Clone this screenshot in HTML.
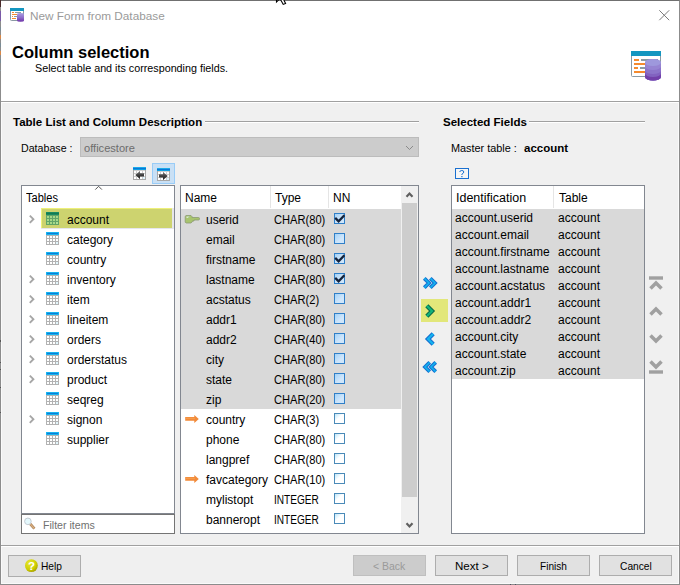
<!DOCTYPE html>
<html><head><meta charset="utf-8">
<style>
*{margin:0;padding:0;box-sizing:border-box}
html,body{width:680px;height:585px;overflow:hidden;background:#f0f0f0}
body{position:relative;font-family:"Liberation Sans",sans-serif;font-size:12px;color:#000}
.a{position:absolute}
.t{position:absolute;white-space:nowrap;line-height:20px;height:20px;transform-origin:0 0}
</style></head><body>

<div class="a" style="left:0px;top:0px;width:680px;height:585px;background:#f0f0f0;border:1px solid #8c8c8c;border-top-color:#707070"></div>
<div class="a" style="left:1px;top:1px;width:678px;height:100px;background:#fff"></div>
<div class="a" style="left:1px;top:101px;width:678px;height:1px;background:#a0a0a0"></div>
<div class="a" style="left:1px;top:102px;width:678px;height:1px;background:#fff"></div>
<div class="a" style="left:1px;top:545px;width:678px;height:1px;background:#a0a0a0"></div>
<div class="a" style="left:1px;top:546px;width:678px;height:1px;background:#fff"></div>
<div class="a" style="left:1px;top:103px;width:1px;height:442px;background:#fafafa"></div>
<div class="a" style="left:678px;top:103px;width:1px;height:442px;background:#fafafa"></div>
<div class="a" style="left:1px;top:547px;width:1px;height:37px;background:#fafafa"></div>
<div class="a" style="left:678px;top:547px;width:1px;height:37px;background:#fafafa"></div>
<div class="a" style="left:1px;top:583px;width:678px;height:1px;background:#fafafa"></div>
<div class="a" style="left:0px;top:0px;width:1px;height:7px;background:#4a2a2a"></div>
<div class="a" style="left:0px;top:11px;width:1px;height:10px;background:#7a5aa8"></div>
<div class="a" style="left:0px;top:27px;width:1px;height:4px;background:#7a8c96"></div>
<div class="a" style="left:0px;top:35px;width:1px;height:4px;background:#d88848"></div>
<div class="a" style="left:0px;top:43px;width:1px;height:4px;background:#7a8c96"></div>
<div class="a" style="left:0px;top:51px;width:1px;height:4px;background:#d88848"></div>
<div class="a" style="left:0px;top:59px;width:1px;height:4px;background:#7a8c96"></div>
<div class="a" style="left:0px;top:70px;width:1px;height:1px;background:#8a9aa4"></div>
<svg class="a" style="left:10px;top:8px" width="15" height="14" viewBox="0 0 15 14">
 <defs><linearGradient id="scyl" x1="0" y1="0" x2="0" y2="1"><stop offset="0" stop-color="#a89ee0"/><stop offset="0.5" stop-color="#9070cc"/><stop offset="1" stop-color="#6e34a8"/></linearGradient></defs>
 <rect x="0.5" y="0.5" width="13" height="12" rx="0.8" fill="#fff" stroke="#8a9aa4"/>
 <rect x="0" y="0" width="14" height="3" fill="#1496c0"/>
 <rect x="2" y="4" width="2" height="1" fill="#f58a2e"/><rect x="5" y="4" width="6" height="1" fill="#8c9aa2"/>
 <rect x="2" y="6" width="5" height="1" fill="#f58a2e"/>
 <rect x="2" y="8" width="1" height="1" fill="#f58a2e"/><rect x="4" y="8" width="4" height="1" fill="#8c9aa2"/>
 <rect x="2" y="10" width="4" height="1" fill="#f58a2e"/>
 <path d="M7 6.2A3.5 1.2 0 0 1 14 6.2V12.5A3.5 1.2 0 0 1 7 12.5Z" fill="url(#scyl)"/>
</svg>
<div class="t" style="left:30px;top:6px;font-size:11.77px;color:#9a9a9a">New Form from Database</div>
<svg class="a" style="left:658px;top:9px" width="13" height="13" viewBox="0 0 13 13"><path d="M1.3 1.3L11.2 11.2M11.2 1.3L1.3 11.2" stroke="#7a7a7a" stroke-width="1"/></svg>
<div class="t" style="left:12px;top:42px;font-size:16.5px;font-weight:bold">Column selection</div>
<div class="t" style="left:35px;top:58px;font-size:10.75px">Select table and its corresponding fields.</div>
<svg class="a" style="left:628px;top:48px" width="36" height="36" viewBox="628 48 36 36"><rect x="631.5" y="51.5" width="29" height="25" rx="1" fill="#fff" stroke="#8a9aa4"/><rect x="631" y="51" width="30" height="5" fill="#1496c0"/><rect x="634" y="59" width="5" height="2" fill="#f58a2e"/><rect x="641" y="59" width="17" height="2" fill="#8c9aa2"/><rect x="634" y="63" width="12" height="2" fill="#f58a2e"/><rect x="634" y="67" width="4" height="2" fill="#f58a2e"/><rect x="640" y="67" width="10" height="2" fill="#8c9aa2"/><rect x="634" y="71" width="12" height="2" fill="#f58a2e"/><path d="M645 62.5A8 3.5 0 0 1 661 62.5V77A8 3.5 0 0 1 645 77Z" fill="#9684d2"/><path d="M645 66.5A8 3.5 0 0 0 661 66.5V77A8 3.5 0 0 1 645 77Z" fill="#8c74ca"/><path d="M645 70.5A8 3.5 0 0 0 661 70.5V77A8 3.5 0 0 1 645 77Z" fill="#8262c0"/><path d="M645 73.5A8 3.5 0 0 0 661 73.5V77A8 3.5 0 0 1 645 77Z" fill="#7240aa"/><ellipse cx="653" cy="62.5" rx="8" ry="3.5" fill="#9e98dc"/></svg>
<div class="t" style="left:13px;top:112px;font-size:11.53px;font-weight:bold">Table List and Column Description</div>
<div class="a" style="left:205px;top:121px;width:214px;height:1px;background:#a0a0a0"></div>
<div class="a" style="left:205px;top:122px;width:214px;height:1px;background:#fff"></div>
<div class="t" style="left:21px;top:138px;font-size:10.65px">Database :</div>
<div class="a" style="left:80px;top:137px;width:339px;height:20px;background:#cccccc;border:1px solid #bcbcbc"></div>
<div class="t" style="left:84px;top:138px;font-size:11.1px;color:#6d6d6d">officestore</div>
<svg class="a" style="left:405px;top:144px" width="11" height="7" viewBox="0 0 11 7"><path d="M1 2L4.5 5.5L8 2" stroke="#8a8a8a" fill="none" stroke-width="1"/></svg>
<svg class="a" style="left:133px;top:167px" width="13" height="13" viewBox="0 0 13 13"><defs><linearGradient id="tb" x1="0" y1="0" x2="0" y2="1"><stop offset="0" stop-color="#28c4f0"/><stop offset="0.5" stop-color="#0a78d8"/><stop offset="1" stop-color="#10b4ea"/></linearGradient><linearGradient id="ag" x1="0" y1="0" x2="0" y2="1"><stop offset="0" stop-color="#808080"/><stop offset="0.5" stop-color="#404040"/><stop offset="1" stop-color="#1a1a1a"/></linearGradient></defs><rect x="0" y="0" width="13" height="13" fill="#a8a8a8"/><rect x="1" y="3" width="11" height="9" fill="#cfcfcf"/><rect x="0" y="0" width="13" height="3" fill="url(#tb)"/><rect x="1" y="4" width="2" height="2" fill="#fff"/><rect x="1" y="7" width="2" height="2" fill="#fff"/><rect x="1" y="10" width="2" height="2" fill="#fff"/><rect x="4" y="4" width="2" height="2" fill="#fff"/><rect x="4" y="7" width="2" height="2" fill="#fff"/><rect x="4" y="10" width="2" height="2" fill="#fff"/><rect x="7" y="4" width="2" height="2" fill="#fff"/><rect x="7" y="7" width="2" height="2" fill="#fff"/><rect x="7" y="10" width="2" height="2" fill="#fff"/><rect x="10" y="4" width="2" height="2" fill="#fff"/><rect x="10" y="7" width="2" height="2" fill="#fff"/><rect x="10" y="10" width="2" height="2" fill="#fff"/><rect x="10" y="10" width="2" height="2" fill="#dff4fc"/><path d="M2.3 8L7 4V6.2H11V9.6H7V12Z" fill="url(#ag)"/></svg>
<div class="a" style="left:152px;top:163px;width:23px;height:21px;background:#c9e0f5;border:1px solid #99ccf7"></div>
<svg class="a" style="left:157px;top:168px" width="13" height="13" viewBox="0 0 13 13"><defs><linearGradient id="tb" x1="0" y1="0" x2="0" y2="1"><stop offset="0" stop-color="#28c4f0"/><stop offset="0.5" stop-color="#0a78d8"/><stop offset="1" stop-color="#10b4ea"/></linearGradient><linearGradient id="ag" x1="0" y1="0" x2="0" y2="1"><stop offset="0" stop-color="#808080"/><stop offset="0.5" stop-color="#404040"/><stop offset="1" stop-color="#1a1a1a"/></linearGradient></defs><rect x="0" y="0" width="13" height="13" fill="#a8a8a8"/><rect x="1" y="3" width="11" height="9" fill="#cfcfcf"/><rect x="0" y="0" width="13" height="3" fill="url(#tb)"/><rect x="1" y="4" width="2" height="2" fill="#fff"/><rect x="1" y="7" width="2" height="2" fill="#fff"/><rect x="1" y="10" width="2" height="2" fill="#fff"/><rect x="4" y="4" width="2" height="2" fill="#fff"/><rect x="4" y="7" width="2" height="2" fill="#fff"/><rect x="4" y="10" width="2" height="2" fill="#fff"/><rect x="7" y="4" width="2" height="2" fill="#fff"/><rect x="7" y="7" width="2" height="2" fill="#fff"/><rect x="7" y="10" width="2" height="2" fill="#fff"/><rect x="10" y="4" width="2" height="2" fill="#fff"/><rect x="10" y="7" width="2" height="2" fill="#fff"/><rect x="10" y="10" width="2" height="2" fill="#fff"/><rect x="10" y="10" width="2" height="2" fill="#dff4fc"/><path d="M10.7 8L6 4V6.2H2V9.6H6V12Z" fill="url(#ag)"/></svg>
<div class="a" style="left:21px;top:185px;width:154px;height:329px;background:#fff;border:1px solid #828790"></div>
<div class="t" style="left:26px;top:188px;transform:scaleX(0.9200)">Tables</div>
<svg class="a" style="left:93px;top:185px" width="10" height="6" viewBox="0 0 10 6"><path d="M2.3 4.6L5.6 1.3L8.9 4.6" stroke="#555" fill="none"/></svg>
<div class="a" style="left:41px;top:228px;width:133px;height:1px;background:#e6e6ee"></div>
<div class="a" style="left:172px;top:208px;width:2px;height:20px;background:#e6e6ea"></div>
<div class="a" style="left:41px;top:208px;width:131px;height:20px;background:#cdd36f;border-top:1px solid #eef07a;border-left:1px solid #f0f27a"></div>
<svg class="a" style="left:28px;top:214px" width="8" height="10" viewBox="0 0 8 10"><path d="M1.8 1.6L5.4 5.2L1.8 8.8" stroke="#a6a6a6" fill="none" stroke-width="1.9"/></svg>
<svg class="a" style="left:46px;top:212px" width="13" height="13" viewBox="0 0 13 13"><rect x="0" y="3" width="13" height="10" fill="#62a468"/><rect x="0" y="0" width="13" height="3" fill="#1a8a62"/><rect x="0" y="1" width="13" height="1" fill="#127a52"/><rect x="1" y="4" width="2" height="2" fill="#a6d888"/><rect x="1" y="7" width="2" height="2" fill="#a6d888"/><rect x="1" y="10" width="2" height="2" fill="#a6d888"/><rect x="4" y="4" width="2" height="2" fill="#a6d888"/><rect x="4" y="7" width="2" height="2" fill="#a6d888"/><rect x="4" y="10" width="2" height="2" fill="#a6d888"/><rect x="7" y="4" width="2" height="2" fill="#a6d888"/><rect x="7" y="7" width="2" height="2" fill="#a6d888"/><rect x="7" y="10" width="2" height="2" fill="#a6d888"/><rect x="10" y="4" width="2" height="2" fill="#a6d888"/><rect x="10" y="7" width="2" height="2" fill="#a6d888"/><rect x="10" y="10" width="2" height="2" fill="#b0e098"/></svg>
<div class="t" style="left:67px;top:210px">account</div>
<svg class="a" style="left:46px;top:232px" width="13" height="13" viewBox="0 0 13 13"><rect x="0" y="3" width="13" height="10" fill="#b2b2b2"/><rect x="0" y="0" width="13" height="3" fill="#18b4f0"/><rect x="1" y="1" width="11" height="1" fill="#0a7ed8"/><rect x="1" y="4" width="2" height="2" fill="#fff"/><rect x="1" y="7" width="2" height="2" fill="#fff"/><rect x="1" y="10" width="2" height="2" fill="#fff"/><rect x="4" y="4" width="2" height="2" fill="#fff"/><rect x="4" y="7" width="2" height="2" fill="#fff"/><rect x="4" y="10" width="2" height="2" fill="#fff"/><rect x="7" y="4" width="2" height="2" fill="#fff"/><rect x="7" y="7" width="2" height="2" fill="#fff"/><rect x="7" y="10" width="2" height="2" fill="#fff"/><rect x="10" y="4" width="2" height="2" fill="#fff"/><rect x="10" y="7" width="2" height="2" fill="#fff"/><rect x="10" y="10" width="2" height="2" fill="#e2f6fc"/></svg>
<div class="t" style="left:67px;top:230px">category</div>
<svg class="a" style="left:46px;top:252px" width="13" height="13" viewBox="0 0 13 13"><rect x="0" y="3" width="13" height="10" fill="#b2b2b2"/><rect x="0" y="0" width="13" height="3" fill="#18b4f0"/><rect x="1" y="1" width="11" height="1" fill="#0a7ed8"/><rect x="1" y="4" width="2" height="2" fill="#fff"/><rect x="1" y="7" width="2" height="2" fill="#fff"/><rect x="1" y="10" width="2" height="2" fill="#fff"/><rect x="4" y="4" width="2" height="2" fill="#fff"/><rect x="4" y="7" width="2" height="2" fill="#fff"/><rect x="4" y="10" width="2" height="2" fill="#fff"/><rect x="7" y="4" width="2" height="2" fill="#fff"/><rect x="7" y="7" width="2" height="2" fill="#fff"/><rect x="7" y="10" width="2" height="2" fill="#fff"/><rect x="10" y="4" width="2" height="2" fill="#fff"/><rect x="10" y="7" width="2" height="2" fill="#fff"/><rect x="10" y="10" width="2" height="2" fill="#e2f6fc"/></svg>
<div class="t" style="left:67px;top:250px">country</div>
<svg class="a" style="left:28px;top:274px" width="8" height="10" viewBox="0 0 8 10"><path d="M1.8 1.6L5.4 5.2L1.8 8.8" stroke="#a6a6a6" fill="none" stroke-width="1.9"/></svg>
<svg class="a" style="left:46px;top:272px" width="13" height="13" viewBox="0 0 13 13"><rect x="0" y="3" width="13" height="10" fill="#b2b2b2"/><rect x="0" y="0" width="13" height="3" fill="#18b4f0"/><rect x="1" y="1" width="11" height="1" fill="#0a7ed8"/><rect x="1" y="4" width="2" height="2" fill="#fff"/><rect x="1" y="7" width="2" height="2" fill="#fff"/><rect x="1" y="10" width="2" height="2" fill="#fff"/><rect x="4" y="4" width="2" height="2" fill="#fff"/><rect x="4" y="7" width="2" height="2" fill="#fff"/><rect x="4" y="10" width="2" height="2" fill="#fff"/><rect x="7" y="4" width="2" height="2" fill="#fff"/><rect x="7" y="7" width="2" height="2" fill="#fff"/><rect x="7" y="10" width="2" height="2" fill="#fff"/><rect x="10" y="4" width="2" height="2" fill="#fff"/><rect x="10" y="7" width="2" height="2" fill="#fff"/><rect x="10" y="10" width="2" height="2" fill="#e2f6fc"/></svg>
<div class="t" style="left:67px;top:270px">inventory</div>
<svg class="a" style="left:28px;top:294px" width="8" height="10" viewBox="0 0 8 10"><path d="M1.8 1.6L5.4 5.2L1.8 8.8" stroke="#a6a6a6" fill="none" stroke-width="1.9"/></svg>
<svg class="a" style="left:46px;top:292px" width="13" height="13" viewBox="0 0 13 13"><rect x="0" y="3" width="13" height="10" fill="#b2b2b2"/><rect x="0" y="0" width="13" height="3" fill="#18b4f0"/><rect x="1" y="1" width="11" height="1" fill="#0a7ed8"/><rect x="1" y="4" width="2" height="2" fill="#fff"/><rect x="1" y="7" width="2" height="2" fill="#fff"/><rect x="1" y="10" width="2" height="2" fill="#fff"/><rect x="4" y="4" width="2" height="2" fill="#fff"/><rect x="4" y="7" width="2" height="2" fill="#fff"/><rect x="4" y="10" width="2" height="2" fill="#fff"/><rect x="7" y="4" width="2" height="2" fill="#fff"/><rect x="7" y="7" width="2" height="2" fill="#fff"/><rect x="7" y="10" width="2" height="2" fill="#fff"/><rect x="10" y="4" width="2" height="2" fill="#fff"/><rect x="10" y="7" width="2" height="2" fill="#fff"/><rect x="10" y="10" width="2" height="2" fill="#e2f6fc"/></svg>
<div class="t" style="left:67px;top:290px">item</div>
<svg class="a" style="left:28px;top:314px" width="8" height="10" viewBox="0 0 8 10"><path d="M1.8 1.6L5.4 5.2L1.8 8.8" stroke="#a6a6a6" fill="none" stroke-width="1.9"/></svg>
<svg class="a" style="left:46px;top:312px" width="13" height="13" viewBox="0 0 13 13"><rect x="0" y="3" width="13" height="10" fill="#b2b2b2"/><rect x="0" y="0" width="13" height="3" fill="#18b4f0"/><rect x="1" y="1" width="11" height="1" fill="#0a7ed8"/><rect x="1" y="4" width="2" height="2" fill="#fff"/><rect x="1" y="7" width="2" height="2" fill="#fff"/><rect x="1" y="10" width="2" height="2" fill="#fff"/><rect x="4" y="4" width="2" height="2" fill="#fff"/><rect x="4" y="7" width="2" height="2" fill="#fff"/><rect x="4" y="10" width="2" height="2" fill="#fff"/><rect x="7" y="4" width="2" height="2" fill="#fff"/><rect x="7" y="7" width="2" height="2" fill="#fff"/><rect x="7" y="10" width="2" height="2" fill="#fff"/><rect x="10" y="4" width="2" height="2" fill="#fff"/><rect x="10" y="7" width="2" height="2" fill="#fff"/><rect x="10" y="10" width="2" height="2" fill="#e2f6fc"/></svg>
<div class="t" style="left:67px;top:310px">lineitem</div>
<svg class="a" style="left:28px;top:334px" width="8" height="10" viewBox="0 0 8 10"><path d="M1.8 1.6L5.4 5.2L1.8 8.8" stroke="#a6a6a6" fill="none" stroke-width="1.9"/></svg>
<svg class="a" style="left:46px;top:332px" width="13" height="13" viewBox="0 0 13 13"><rect x="0" y="3" width="13" height="10" fill="#b2b2b2"/><rect x="0" y="0" width="13" height="3" fill="#18b4f0"/><rect x="1" y="1" width="11" height="1" fill="#0a7ed8"/><rect x="1" y="4" width="2" height="2" fill="#fff"/><rect x="1" y="7" width="2" height="2" fill="#fff"/><rect x="1" y="10" width="2" height="2" fill="#fff"/><rect x="4" y="4" width="2" height="2" fill="#fff"/><rect x="4" y="7" width="2" height="2" fill="#fff"/><rect x="4" y="10" width="2" height="2" fill="#fff"/><rect x="7" y="4" width="2" height="2" fill="#fff"/><rect x="7" y="7" width="2" height="2" fill="#fff"/><rect x="7" y="10" width="2" height="2" fill="#fff"/><rect x="10" y="4" width="2" height="2" fill="#fff"/><rect x="10" y="7" width="2" height="2" fill="#fff"/><rect x="10" y="10" width="2" height="2" fill="#e2f6fc"/></svg>
<div class="t" style="left:67px;top:330px">orders</div>
<svg class="a" style="left:28px;top:354px" width="8" height="10" viewBox="0 0 8 10"><path d="M1.8 1.6L5.4 5.2L1.8 8.8" stroke="#a6a6a6" fill="none" stroke-width="1.9"/></svg>
<svg class="a" style="left:46px;top:352px" width="13" height="13" viewBox="0 0 13 13"><rect x="0" y="3" width="13" height="10" fill="#b2b2b2"/><rect x="0" y="0" width="13" height="3" fill="#18b4f0"/><rect x="1" y="1" width="11" height="1" fill="#0a7ed8"/><rect x="1" y="4" width="2" height="2" fill="#fff"/><rect x="1" y="7" width="2" height="2" fill="#fff"/><rect x="1" y="10" width="2" height="2" fill="#fff"/><rect x="4" y="4" width="2" height="2" fill="#fff"/><rect x="4" y="7" width="2" height="2" fill="#fff"/><rect x="4" y="10" width="2" height="2" fill="#fff"/><rect x="7" y="4" width="2" height="2" fill="#fff"/><rect x="7" y="7" width="2" height="2" fill="#fff"/><rect x="7" y="10" width="2" height="2" fill="#fff"/><rect x="10" y="4" width="2" height="2" fill="#fff"/><rect x="10" y="7" width="2" height="2" fill="#fff"/><rect x="10" y="10" width="2" height="2" fill="#e2f6fc"/></svg>
<div class="t" style="left:67px;top:350px">orderstatus</div>
<svg class="a" style="left:28px;top:374px" width="8" height="10" viewBox="0 0 8 10"><path d="M1.8 1.6L5.4 5.2L1.8 8.8" stroke="#a6a6a6" fill="none" stroke-width="1.9"/></svg>
<svg class="a" style="left:46px;top:372px" width="13" height="13" viewBox="0 0 13 13"><rect x="0" y="3" width="13" height="10" fill="#b2b2b2"/><rect x="0" y="0" width="13" height="3" fill="#18b4f0"/><rect x="1" y="1" width="11" height="1" fill="#0a7ed8"/><rect x="1" y="4" width="2" height="2" fill="#fff"/><rect x="1" y="7" width="2" height="2" fill="#fff"/><rect x="1" y="10" width="2" height="2" fill="#fff"/><rect x="4" y="4" width="2" height="2" fill="#fff"/><rect x="4" y="7" width="2" height="2" fill="#fff"/><rect x="4" y="10" width="2" height="2" fill="#fff"/><rect x="7" y="4" width="2" height="2" fill="#fff"/><rect x="7" y="7" width="2" height="2" fill="#fff"/><rect x="7" y="10" width="2" height="2" fill="#fff"/><rect x="10" y="4" width="2" height="2" fill="#fff"/><rect x="10" y="7" width="2" height="2" fill="#fff"/><rect x="10" y="10" width="2" height="2" fill="#e2f6fc"/></svg>
<div class="t" style="left:67px;top:370px">product</div>
<svg class="a" style="left:46px;top:392px" width="13" height="13" viewBox="0 0 13 13"><rect x="0" y="3" width="13" height="10" fill="#b2b2b2"/><rect x="0" y="0" width="13" height="3" fill="#18b4f0"/><rect x="1" y="1" width="11" height="1" fill="#0a7ed8"/><rect x="1" y="4" width="2" height="2" fill="#fff"/><rect x="1" y="7" width="2" height="2" fill="#fff"/><rect x="1" y="10" width="2" height="2" fill="#fff"/><rect x="4" y="4" width="2" height="2" fill="#fff"/><rect x="4" y="7" width="2" height="2" fill="#fff"/><rect x="4" y="10" width="2" height="2" fill="#fff"/><rect x="7" y="4" width="2" height="2" fill="#fff"/><rect x="7" y="7" width="2" height="2" fill="#fff"/><rect x="7" y="10" width="2" height="2" fill="#fff"/><rect x="10" y="4" width="2" height="2" fill="#fff"/><rect x="10" y="7" width="2" height="2" fill="#fff"/><rect x="10" y="10" width="2" height="2" fill="#e2f6fc"/></svg>
<div class="t" style="left:67px;top:390px">seqreg</div>
<svg class="a" style="left:28px;top:414px" width="8" height="10" viewBox="0 0 8 10"><path d="M1.8 1.6L5.4 5.2L1.8 8.8" stroke="#a6a6a6" fill="none" stroke-width="1.9"/></svg>
<svg class="a" style="left:46px;top:412px" width="13" height="13" viewBox="0 0 13 13"><rect x="0" y="3" width="13" height="10" fill="#b2b2b2"/><rect x="0" y="0" width="13" height="3" fill="#18b4f0"/><rect x="1" y="1" width="11" height="1" fill="#0a7ed8"/><rect x="1" y="4" width="2" height="2" fill="#fff"/><rect x="1" y="7" width="2" height="2" fill="#fff"/><rect x="1" y="10" width="2" height="2" fill="#fff"/><rect x="4" y="4" width="2" height="2" fill="#fff"/><rect x="4" y="7" width="2" height="2" fill="#fff"/><rect x="4" y="10" width="2" height="2" fill="#fff"/><rect x="7" y="4" width="2" height="2" fill="#fff"/><rect x="7" y="7" width="2" height="2" fill="#fff"/><rect x="7" y="10" width="2" height="2" fill="#fff"/><rect x="10" y="4" width="2" height="2" fill="#fff"/><rect x="10" y="7" width="2" height="2" fill="#fff"/><rect x="10" y="10" width="2" height="2" fill="#e2f6fc"/></svg>
<div class="t" style="left:67px;top:410px">signon</div>
<svg class="a" style="left:46px;top:432px" width="13" height="13" viewBox="0 0 13 13"><rect x="0" y="3" width="13" height="10" fill="#b2b2b2"/><rect x="0" y="0" width="13" height="3" fill="#18b4f0"/><rect x="1" y="1" width="11" height="1" fill="#0a7ed8"/><rect x="1" y="4" width="2" height="2" fill="#fff"/><rect x="1" y="7" width="2" height="2" fill="#fff"/><rect x="1" y="10" width="2" height="2" fill="#fff"/><rect x="4" y="4" width="2" height="2" fill="#fff"/><rect x="4" y="7" width="2" height="2" fill="#fff"/><rect x="4" y="10" width="2" height="2" fill="#fff"/><rect x="7" y="4" width="2" height="2" fill="#fff"/><rect x="7" y="7" width="2" height="2" fill="#fff"/><rect x="7" y="10" width="2" height="2" fill="#fff"/><rect x="10" y="4" width="2" height="2" fill="#fff"/><rect x="10" y="7" width="2" height="2" fill="#fff"/><rect x="10" y="10" width="2" height="2" fill="#e2f6fc"/></svg>
<div class="t" style="left:67px;top:430px">supplier</div>
<div class="a" style="left:21px;top:514px;width:154px;height:20px;background:#fff;border:1px solid #747474"></div>
<svg class="a" style="left:23px;top:517px" width="14" height="14" viewBox="0 0 14 14">
 <path d="M7.2 6.9L11.4 11.6" stroke="#a88058" stroke-width="2.8"/>
 <path d="M7.2 6.9L11.4 11.6" stroke="#dcb080" stroke-width="1.4"/>
 <circle cx="4.9" cy="4.35" r="3.3" fill="#e4f8fc" stroke="#c4ccd4" stroke-width="1"/>
</svg>
<div class="t" style="left:43px;top:515px;font-size:10.6px;color:#707070">Filter items</div>
<div class="a" style="left:180px;top:185px;width:239px;height:349px;background:#fff;border:1px solid #828790"></div>
<div class="a" style="left:270px;top:186px;width:1px;height:22px;background:#e5e5e5"></div>
<div class="a" style="left:328px;top:186px;width:1px;height:22px;background:#e5e5e5"></div>
<div class="t" style="left:185px;top:188px">Name</div>
<div class="t" style="left:275px;top:188px">Type</div>
<div class="t" style="left:333px;top:188px">NN</div>
<div class="a" style="left:181px;top:209px;width:220px;height:200px;background:#d9d9d9"></div>
<div class="a" style="left:401px;top:186px;width:17px;height:347px;background:#f0f0f0"></div>
<div class="a" style="left:402px;top:203px;width:15px;height:294px;background:#cdcdcd"></div>
<svg class="a" style="left:405px;top:191px" width="10" height="8" viewBox="0 0 10 8"><path d="M1.5 5.8L4.5 2.6L7.5 5.8" stroke="#606060" fill="none" stroke-width="2.2"/></svg>
<svg class="a" style="left:405px;top:522px" width="10" height="8" viewBox="0 0 10 8"><path d="M1.5 1.2L4.5 4.4L7.5 1.2" stroke="#606060" fill="none" stroke-width="2.2"/></svg>
<div class="t" style="left:206px;top:210px">userid</div>
<div class="t" style="left:274px;top:210px;transform:scaleX(0.9270)">CHAR(80)</div>
<svg class="a" style="left:334px;top:213px" width="11" height="11" viewBox="0 0 11 11"><defs><linearGradient id="cg0" x1="0" y1="0" x2="1" y2="1"><stop offset="0" stop-color="#9fd0f8"/><stop offset="0.6" stop-color="#cfe6fb"/></linearGradient></defs><rect x="0.5" y="0.5" width="10" height="10" fill="url(#cg0)" stroke="#2f7fc8"/></svg>
<svg class="a" style="left:334px;top:213px" width="11" height="11" viewBox="0 0 11 11"><path d="M1.2 4.9L4.6 8.3L10.4 2.2" stroke="#14233c" fill="none" stroke-width="2.3"/></svg>
<svg class="a" style="left:184px;top:214px" width="16" height="10" viewBox="0 0 16 10"><path d="M2 1.5H7L8 2.5V3.5H14.5Q15.5 3.5 15.5 4.8Q15.5 6 14.5 6H10V7H8.3V7.8L7 9H2L1.2 8.2V2.3Z" fill="#a8c46e" stroke="#8c9a72" stroke-width="0.8"/><rect x="2.6" y="2.6" width="1.2" height="1.2" fill="#f4fbff"/><rect x="4.2" y="2.4" width="1" height="1" fill="#c8e4f0"/></svg>
<div class="t" style="left:206px;top:230px">email</div>
<div class="t" style="left:274px;top:230px;transform:scaleX(0.9270)">CHAR(80)</div>
<svg class="a" style="left:334px;top:233px" width="11" height="11" viewBox="0 0 11 11"><defs><linearGradient id="cg1" x1="0" y1="0" x2="1" y2="1"><stop offset="0" stop-color="#9fd0f8"/><stop offset="0.6" stop-color="#cfe6fb"/></linearGradient></defs><rect x="0.5" y="0.5" width="10" height="10" fill="url(#cg1)" stroke="#2f7fc8"/></svg>
<div class="t" style="left:206px;top:250px">firstname</div>
<div class="t" style="left:274px;top:250px;transform:scaleX(0.9270)">CHAR(80)</div>
<svg class="a" style="left:334px;top:253px" width="11" height="11" viewBox="0 0 11 11"><defs><linearGradient id="cg2" x1="0" y1="0" x2="1" y2="1"><stop offset="0" stop-color="#9fd0f8"/><stop offset="0.6" stop-color="#cfe6fb"/></linearGradient></defs><rect x="0.5" y="0.5" width="10" height="10" fill="url(#cg2)" stroke="#2f7fc8"/></svg>
<svg class="a" style="left:334px;top:253px" width="11" height="11" viewBox="0 0 11 11"><path d="M1.2 4.9L4.6 8.3L10.4 2.2" stroke="#14233c" fill="none" stroke-width="2.3"/></svg>
<div class="t" style="left:206px;top:270px">lastname</div>
<div class="t" style="left:274px;top:270px;transform:scaleX(0.9270)">CHAR(80)</div>
<svg class="a" style="left:334px;top:273px" width="11" height="11" viewBox="0 0 11 11"><defs><linearGradient id="cg3" x1="0" y1="0" x2="1" y2="1"><stop offset="0" stop-color="#9fd0f8"/><stop offset="0.6" stop-color="#cfe6fb"/></linearGradient></defs><rect x="0.5" y="0.5" width="10" height="10" fill="url(#cg3)" stroke="#2f7fc8"/></svg>
<svg class="a" style="left:334px;top:273px" width="11" height="11" viewBox="0 0 11 11"><path d="M1.2 4.9L4.6 8.3L10.4 2.2" stroke="#14233c" fill="none" stroke-width="2.3"/></svg>
<div class="t" style="left:206px;top:290px">acstatus</div>
<div class="t" style="left:274px;top:290px;transform:scaleX(0.9270)">CHAR(2)</div>
<svg class="a" style="left:334px;top:293px" width="11" height="11" viewBox="0 0 11 11"><defs><linearGradient id="cg4" x1="0" y1="0" x2="1" y2="1"><stop offset="0" stop-color="#9fd0f8"/><stop offset="0.6" stop-color="#cfe6fb"/></linearGradient></defs><rect x="0.5" y="0.5" width="10" height="10" fill="url(#cg4)" stroke="#2f7fc8"/></svg>
<div class="t" style="left:206px;top:310px">addr1</div>
<div class="t" style="left:274px;top:310px;transform:scaleX(0.9270)">CHAR(80)</div>
<svg class="a" style="left:334px;top:313px" width="11" height="11" viewBox="0 0 11 11"><defs><linearGradient id="cg5" x1="0" y1="0" x2="1" y2="1"><stop offset="0" stop-color="#9fd0f8"/><stop offset="0.6" stop-color="#cfe6fb"/></linearGradient></defs><rect x="0.5" y="0.5" width="10" height="10" fill="url(#cg5)" stroke="#2f7fc8"/></svg>
<div class="t" style="left:206px;top:330px">addr2</div>
<div class="t" style="left:274px;top:330px;transform:scaleX(0.9270)">CHAR(40)</div>
<svg class="a" style="left:334px;top:333px" width="11" height="11" viewBox="0 0 11 11"><defs><linearGradient id="cg6" x1="0" y1="0" x2="1" y2="1"><stop offset="0" stop-color="#9fd0f8"/><stop offset="0.6" stop-color="#cfe6fb"/></linearGradient></defs><rect x="0.5" y="0.5" width="10" height="10" fill="url(#cg6)" stroke="#2f7fc8"/></svg>
<div class="t" style="left:206px;top:350px">city</div>
<div class="t" style="left:274px;top:350px;transform:scaleX(0.9270)">CHAR(80)</div>
<svg class="a" style="left:334px;top:353px" width="11" height="11" viewBox="0 0 11 11"><defs><linearGradient id="cg7" x1="0" y1="0" x2="1" y2="1"><stop offset="0" stop-color="#9fd0f8"/><stop offset="0.6" stop-color="#cfe6fb"/></linearGradient></defs><rect x="0.5" y="0.5" width="10" height="10" fill="url(#cg7)" stroke="#2f7fc8"/></svg>
<div class="t" style="left:206px;top:370px">state</div>
<div class="t" style="left:274px;top:370px;transform:scaleX(0.9270)">CHAR(80)</div>
<svg class="a" style="left:334px;top:373px" width="11" height="11" viewBox="0 0 11 11"><defs><linearGradient id="cg8" x1="0" y1="0" x2="1" y2="1"><stop offset="0" stop-color="#9fd0f8"/><stop offset="0.6" stop-color="#cfe6fb"/></linearGradient></defs><rect x="0.5" y="0.5" width="10" height="10" fill="url(#cg8)" stroke="#2f7fc8"/></svg>
<div class="t" style="left:206px;top:390px">zip</div>
<div class="t" style="left:274px;top:390px;transform:scaleX(0.9270)">CHAR(20)</div>
<svg class="a" style="left:334px;top:393px" width="11" height="11" viewBox="0 0 11 11"><defs><linearGradient id="cg9" x1="0" y1="0" x2="1" y2="1"><stop offset="0" stop-color="#9fd0f8"/><stop offset="0.6" stop-color="#cfe6fb"/></linearGradient></defs><rect x="0.5" y="0.5" width="10" height="10" fill="url(#cg9)" stroke="#2f7fc8"/></svg>
<div class="t" style="left:206px;top:410px">country</div>
<div class="t" style="left:274px;top:410px;transform:scaleX(0.9270)">CHAR(3)</div>
<svg class="a" style="left:334px;top:413px" width="11" height="11" viewBox="0 0 11 11"><defs><linearGradient id="cg10" x1="0" y1="0" x2="1" y2="1"><stop offset="0" stop-color="#b8e4fa"/><stop offset="0.45" stop-color="#fff"/></linearGradient></defs><rect x="0.5" y="0.5" width="10" height="10" fill="url(#cg10)" stroke="#4a8ab8"/></svg>
<svg class="a" style="left:185px;top:414px" width="14" height="10" viewBox="0 0 14 10"><path d="M0.2 2.9H9.3V0.9L13.8 4.9L9.3 8.9V6.8H0.2Z" fill="#f28a3a"/><path d="M1 3.8H10V4.8H1Z" fill="#f6a050"/></svg>
<div class="t" style="left:206px;top:430px">phone</div>
<div class="t" style="left:274px;top:430px;transform:scaleX(0.9270)">CHAR(80)</div>
<svg class="a" style="left:334px;top:433px" width="11" height="11" viewBox="0 0 11 11"><defs><linearGradient id="cg11" x1="0" y1="0" x2="1" y2="1"><stop offset="0" stop-color="#b8e4fa"/><stop offset="0.45" stop-color="#fff"/></linearGradient></defs><rect x="0.5" y="0.5" width="10" height="10" fill="url(#cg11)" stroke="#4a8ab8"/></svg>
<div class="t" style="left:206px;top:450px">langpref</div>
<div class="t" style="left:274px;top:450px;transform:scaleX(0.9270)">CHAR(80)</div>
<svg class="a" style="left:334px;top:453px" width="11" height="11" viewBox="0 0 11 11"><defs><linearGradient id="cg12" x1="0" y1="0" x2="1" y2="1"><stop offset="0" stop-color="#b8e4fa"/><stop offset="0.45" stop-color="#fff"/></linearGradient></defs><rect x="0.5" y="0.5" width="10" height="10" fill="url(#cg12)" stroke="#4a8ab8"/></svg>
<div class="t" style="left:206px;top:470px">favcategory</div>
<div class="t" style="left:274px;top:470px;transform:scaleX(0.9270)">CHAR(10)</div>
<svg class="a" style="left:334px;top:473px" width="11" height="11" viewBox="0 0 11 11"><defs><linearGradient id="cg13" x1="0" y1="0" x2="1" y2="1"><stop offset="0" stop-color="#b8e4fa"/><stop offset="0.45" stop-color="#fff"/></linearGradient></defs><rect x="0.5" y="0.5" width="10" height="10" fill="url(#cg13)" stroke="#4a8ab8"/></svg>
<svg class="a" style="left:185px;top:474px" width="14" height="10" viewBox="0 0 14 10"><path d="M0.2 2.9H9.3V0.9L13.8 4.9L9.3 8.9V6.8H0.2Z" fill="#f28a3a"/><path d="M1 3.8H10V4.8H1Z" fill="#f6a050"/></svg>
<div class="t" style="left:206px;top:490px">mylistopt</div>
<div class="t" style="left:274px;top:490px;transform:scaleX(0.8400)">INTEGER</div>
<svg class="a" style="left:334px;top:493px" width="11" height="11" viewBox="0 0 11 11"><defs><linearGradient id="cg14" x1="0" y1="0" x2="1" y2="1"><stop offset="0" stop-color="#b8e4fa"/><stop offset="0.45" stop-color="#fff"/></linearGradient></defs><rect x="0.5" y="0.5" width="10" height="10" fill="url(#cg14)" stroke="#4a8ab8"/></svg>
<div class="t" style="left:206px;top:510px">banneropt</div>
<div class="t" style="left:274px;top:510px;transform:scaleX(0.8400)">INTEGER</div>
<svg class="a" style="left:334px;top:513px" width="11" height="11" viewBox="0 0 11 11"><defs><linearGradient id="cg15" x1="0" y1="0" x2="1" y2="1"><stop offset="0" stop-color="#b8e4fa"/><stop offset="0.45" stop-color="#fff"/></linearGradient></defs><rect x="0.5" y="0.5" width="10" height="10" fill="url(#cg15)" stroke="#4a8ab8"/></svg>
<svg class="a" style="left:421px;top:275px" width="18" height="16" viewBox="0 0 18 16"><path d="M3.3 3.3L8 8L3.3 12.7" stroke="#1570d0" stroke-width="3.8" fill="none" stroke-linejoin="miter"/><path d="M9.3 3.3L14 8L9.3 12.7" stroke="#1570d0" stroke-width="3.8" fill="none" stroke-linejoin="miter"/><path d="M3.3 3.3L8 8L3.3 12.7" stroke="#14b4f0" stroke-width="1.6" fill="none" stroke-linejoin="miter"/><path d="M9.3 3.3L14 8L9.3 12.7" stroke="#14b4f0" stroke-width="1.6" fill="none" stroke-linejoin="miter"/></svg>
<div class="a" style="left:421px;top:299px;width:27px;height:23px;background:#e2e77a"></div>
<svg class="a" style="left:423px;top:303px" width="14" height="16" viewBox="0 0 14 16"><path d="M3.8 2.8L9 8L3.8 13.2" stroke="#0a6a4a" stroke-width="4.4" fill="none" stroke-linejoin="miter"/><path d="M3.8 2.8L9 8L3.8 13.2" stroke="#10b47a" stroke-width="2.2" fill="none" stroke-linejoin="miter"/></svg>
<svg class="a" style="left:423px;top:331px" width="14" height="16" viewBox="0 0 14 16"><path d="M10.2 2.8L5 8L10.2 13.2" stroke="#1570d0" stroke-width="4.4" fill="none" stroke-linejoin="miter"/><path d="M10.2 2.8L5 8L10.2 13.2" stroke="#14b4f0" stroke-width="2.2" fill="none" stroke-linejoin="miter"/></svg>
<svg class="a" style="left:421px;top:359px" width="18" height="16" viewBox="0 0 18 16"><path d="M8.7 3.3L4 8L8.7 12.7" stroke="#1570d0" stroke-width="3.8" fill="none" stroke-linejoin="miter"/><path d="M14.7 3.3L10 8L14.7 12.7" stroke="#1570d0" stroke-width="3.8" fill="none" stroke-linejoin="miter"/><path d="M8.7 3.3L4 8L8.7 12.7" stroke="#14b4f0" stroke-width="1.6" fill="none" stroke-linejoin="miter"/><path d="M14.7 3.3L10 8L14.7 12.7" stroke="#14b4f0" stroke-width="1.6" fill="none" stroke-linejoin="miter"/></svg>
<div class="t" style="left:443px;top:112px;font-size:11.53px;font-weight:bold">Selected Fields</div>
<div class="a" style="left:529px;top:121px;width:116px;height:1px;background:#a0a0a0"></div>
<div class="a" style="left:529px;top:122px;width:116px;height:1px;background:#fff"></div>
<div class="t" style="left:451px;top:138px;font-size:10.86px">Master table :</div>
<div class="t" style="left:524px;top:138px;font-size:11.5px;font-weight:bold">account</div>
<svg class="a" style="left:452px;top:165px" width="20" height="17" viewBox="452 165 20 17"><rect x="455.5" y="168.5" width="13" height="10" fill="#f6f6f6" stroke="#1a70d0"/><path d="M459.7 172Q459.9 170.5 461.8 170.5Q463.8 170.5 463.8 172Q463.8 173.1 461.9 174.2V175" stroke="#1a70d0" stroke-width="1" fill="none"/><rect x="461.3" y="176" width="1.2" height="1.2" fill="#1a70d0"/></svg>
<div class="a" style="left:451px;top:185px;width:194px;height:349px;background:#fff;border:1px solid #828790"></div>
<div class="a" style="left:553px;top:186px;width:1px;height:22px;background:#e5e5e5"></div>
<div class="t" style="left:456px;top:188px;transform:scaleX(1.0400)">Identification</div>
<div class="t" style="left:559px;top:188px">Table</div>
<div class="a" style="left:452px;top:209px;width:192px;height:170px;background:#d9d9d9"></div>
<div class="t" style="left:455px;top:208px">account.userid</div>
<div class="t" style="left:558px;top:208px">account</div>
<div class="t" style="left:455px;top:225px">account.email</div>
<div class="t" style="left:558px;top:225px">account</div>
<div class="t" style="left:455px;top:242px">account.firstname</div>
<div class="t" style="left:558px;top:242px">account</div>
<div class="t" style="left:455px;top:259px">account.lastname</div>
<div class="t" style="left:558px;top:259px">account</div>
<div class="t" style="left:455px;top:276px">account.acstatus</div>
<div class="t" style="left:558px;top:276px">account</div>
<div class="t" style="left:455px;top:293px">account.addr1</div>
<div class="t" style="left:558px;top:293px">account</div>
<div class="t" style="left:455px;top:310px">account.addr2</div>
<div class="t" style="left:558px;top:310px">account</div>
<div class="t" style="left:455px;top:327px">account.city</div>
<div class="t" style="left:558px;top:327px">account</div>
<div class="t" style="left:455px;top:344px">account.state</div>
<div class="t" style="left:558px;top:344px">account</div>
<div class="t" style="left:455px;top:361px">account.zip</div>
<div class="t" style="left:558px;top:361px">account</div>
<svg class="a" style="left:644px;top:270px" width="24" height="110" viewBox="644 270 24 110"><rect x="649" y="276.3" width="14" height="3.4" fill="#a0a0a0"/><path d="M650.5 288.5L656 283L661.5 288.5" stroke="#a0a0a0" stroke-width="3.5" fill="none"/><path d="M650.5 314.5L656 309L661.5 314.5" stroke="#a0a0a0" stroke-width="3.5" fill="none"/><path d="M650.5 335.5L656 341L661.5 335.5" stroke="#a0a0a0" stroke-width="3.5" fill="none"/><path d="M650.5 361.5L656 367L661.5 361.5" stroke="#a0a0a0" stroke-width="3.5" fill="none"/><rect x="649" y="370.3" width="14" height="3.4" fill="#a0a0a0"/></svg>
<div class="a" style="left:8px;top:555px;width:73px;height:22px;background:#e1e1e1;border:1px solid #adadad"></div>
<svg class="a" style="left:25px;top:559px" width="14" height="14" viewBox="0 0 14 14">
 <defs><radialGradient id="hg" cx="0.35" cy="0.3" r="0.75"><stop offset="0" stop-color="#e8e830"/><stop offset="0.7" stop-color="#cccc00"/><stop offset="1" stop-color="#a8a000"/></radialGradient></defs>
 <circle cx="6.4" cy="6.6" r="6.4" fill="url(#hg)"/>
 <text x="6.5" y="11" font-family="Liberation Sans" font-weight="bold" font-size="11.5" fill="#fff" text-anchor="middle">?</text>
</svg>
<div class="t" style="left:41px;top:557px;font-size:10.2px">Help</div>
<div class="a" style="left:353px;top:555px;width:73px;height:21px;background:#cccccc;border:1px solid #bfbfbf"></div>
<div class="t" style="left:373.4px;top:556px;font-size:11px;color:#9a9a9a;transform:scaleX(0.9510)">&lt; Back</div>
<div class="a" style="left:435px;top:555px;width:73px;height:21px;background:#e1e1e1;border:1px solid #adadad"></div>
<div class="t" style="left:454.6px;top:556px;font-size:11px;transform:scaleX(1.0504)">Next &gt;</div>
<div class="a" style="left:517px;top:555px;width:73px;height:21px;background:#e1e1e1;border:1px solid #adadad"></div>
<div class="t" style="left:540.0px;top:556px;font-size:11px;transform:scaleX(0.9170)">Finish</div>
<div class="a" style="left:599px;top:555px;width:73px;height:21px;background:#e1e1e1;border:1px solid #adadad"></div>
<div class="t" style="left:619.6px;top:556px;font-size:11px;transform:scaleX(0.9288)">Cancel</div>
<svg class="a" style="left:265px;top:0px" width="30" height="10" viewBox="265 0 30 10"><path d="M276.5 -14V2L280 -1.5L283.2 4.4L285.6 3.4L282.6 -2.5H287Z" fill="#fff" stroke="#000" stroke-width="1.1"/></svg>
<div class="a" style="left:510px;top:584px;width:1px;height:1px;background:#505060"></div>
<div class="a" style="left:515px;top:584px;width:1px;height:1px;background:#505060"></div>
<div class="a" style="left:0px;top:340px;width:1px;height:1px;background:#555"></div>
<div class="a" style="left:0px;top:341px;width:1px;height:1px;background:#555"></div>
<div class="a" style="left:0px;top:362px;width:1px;height:1px;background:#555"></div>
<div class="a" style="left:0px;top:369px;width:1px;height:1px;background:#555"></div>
<div class="a" style="left:0px;top:387px;width:1px;height:1px;background:#555"></div>
<div class="a" style="left:0px;top:412px;width:1px;height:1px;background:#555"></div>
</body></html>
